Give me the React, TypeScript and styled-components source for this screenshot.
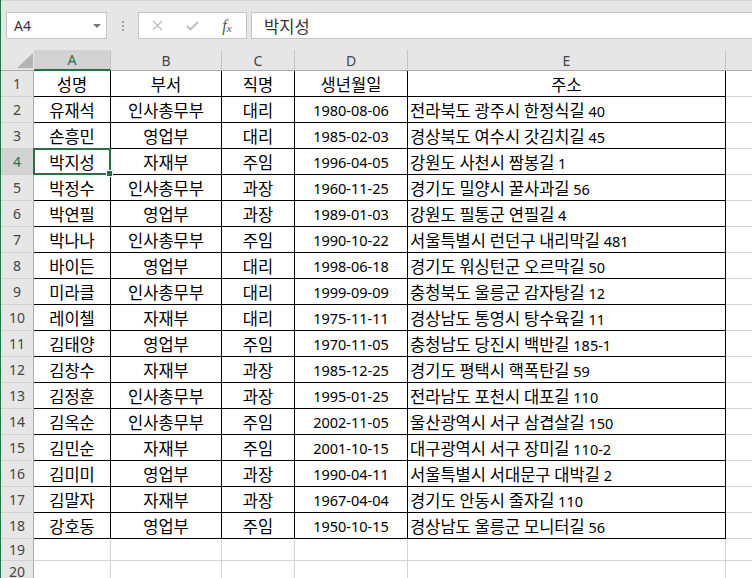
import React from 'react';
import styled, { createGlobalStyle, css } from 'styled-components';

const GlobalStyle = createGlobalStyle`
  html, body {
    margin: 0;
    padding: 0;
    background: #ffffff;
  }
  * {
    box-sizing: border-box;
  }
`;

const GREEN = '#217346';

const columns = ['A', 'B', 'C', 'D', 'E', 'F'];
const colWidths = [77, 111, 73, 113, 318, 200];

const rows: string[][] = [
  ['성명', '부서', '직명', '생년월일', '주소'],
  ['유재석', '인사총무부', '대리', '1980-08-06', '전라북도 광주시 한정식길 40'],
  ['손흥민', '영업부', '대리', '1985-02-03', '경상북도 여수시 갓김치길 45'],
  ['박지성', '자재부', '주임', '1996-04-05', '강원도 사천시 짬봉길 1'],
  ['박정수', '인사총무부', '과장', '1960-11-25', '경기도 밀양시 꿀사과길 56'],
  ['박연필', '영업부', '과장', '1989-01-03', '강원도 필통군 연필길 4'],
  ['박나나', '인사총무부', '주임', '1990-10-22', '서울특별시 런던구 내리막길 481'],
  ['바이든', '영업부', '대리', '1998-06-18', '경기도 워싱턴군 오르막길 50'],
  ['미라클', '인사총무부', '대리', '1999-09-09', '충청북도 울릉군 감자탕길 12'],
  ['레이첼', '자재부', '대리', '1975-11-11', '경상남도 통영시 탕수육길 11'],
  ['김태양', '영업부', '주임', '1970-11-05', '충청남도 당진시 백반길 185-1'],
  ['김창수', '자재부', '과장', '1985-12-25', '경기도 평택시 핵폭탄길 59'],
  ['김정훈', '인사총무부', '과장', '1995-01-25', '전라남도 포천시 대포길 110'],
  ['김옥순', '인사총무부', '주임', '2002-11-05', '울산광역시 서구 삼겹살길 150'],
  ['김민순', '자재부', '주임', '2001-10-15', '대구광역시 서구 장미길 110-2'],
  ['김미미', '영업부', '과장', '1990-04-11', '서울특별시 서대문구 대박길 2'],
  ['김말자', '자재부', '과장', '1967-04-04', '경기도 안동시 줄자길 110'],
  ['강호동', '영업부', '주임', '1950-10-15', '경상남도 울릉군 모니터길 56'],
];

const emptyRows = 2;

const Window = styled.div`
  width: 752px;
  height: 578px;
  overflow: hidden;
  border-left: 1px solid ${GREEN};
  background: #ffffff;
  font-family: "Noto Sans", "Noto Sans CJK KR", sans-serif;
`;

// Hangul runs are set a size up so they take the width Malgun Gothic gives them
const Hangul = styled.span`
  font-family: "Noto Sans CJK KR", sans-serif;
  font-size: 1.14em;
`;

const Text = styled.span`
  white-space: pre;
`;

const mixed = (s: string) => (
  <Text>
    {s.split(/([\uAC00-\uD7A3]+)/).map((part, i) =>
      i % 2 === 1 ? <Hangul key={i}>{part}</Hangul> : part
    )}
  </Text>
);

const FormulaBar = styled.div`
  display: flex;
  align-items: flex-start;
  height: 50px;
  padding-top: 11px;
  border-top: 1px solid #d4d4d4;
  background: #e6e6e6;
`;

const NameBox = styled.div`
  display: flex;
  align-items: center;
  justify-content: space-between;
  width: 101px;
  height: 27px;
  margin-left: 5px;
  padding: 0 5px 0 7px;
  background: #ffffff;
  border: 1px solid #c6c6c6;
  font-size: 14px;
  color: #333333;
`;

const DropArrow = styled.span`
  width: 0;
  height: 0;
  border-left: 4px solid transparent;
  border-right: 4px solid transparent;
  border-top: 4px solid #777777;
`;

const Grip = styled.div`
  display: flex;
  flex-direction: column;
  align-items: center;
  justify-content: center;
  gap: 2px;
  width: 31px;
  height: 27px;

  span {
    width: 2px;
    height: 2px;
    background: #a0a0a0;
  }
`;

const FxButtons = styled.div`
  display: flex;
  align-items: center;
  width: 109px;
  height: 27px;
  background: #ffffff;
  border: 1px solid #c6c6c6;
`;

const FxButton = styled.span<{ $width: number }>`
  display: flex;
  align-items: center;
  justify-content: center;
  width: ${p => p.$width}px;
  height: 100%;
`;

const FxLabel = styled.span`
  font-family: "Liberation Serif", serif;
  font-style: italic;
  font-size: 16px;
  color: #555555;

  sub {
    font-size: 11px;
    vertical-align: 0;
    position: relative;
    top: 1px;
  }
`;

const FormulaInput = styled.div`
  flex: 1;
  display: flex;
  align-items: center;
  height: 27px;
  margin-left: 4px;
  padding-left: 12px;
  background: #ffffff;
  border: 1px solid #c6c6c6;
  border-right: none;
  font-size: 14.5px;
  color: #333333;
`;

const Sheet = styled.div`
  display: grid;
  grid-template-columns: 33px ${colWidths.map(w => `${w}px`).join(' ')};
  grid-template-rows: 21px repeat(${rows.length}, 26px) repeat(${emptyRows}, 22px);
`;

const Corner = styled.div`
  display: flex;
  align-items: flex-end;
  justify-content: flex-end;
  padding: 0 1px 2px 0;
  background: #e6e6e6;
  border-bottom: 1px solid #ababab;
`;

const ColHeader = styled.div<{ $active?: boolean }>`
  display: flex;
  align-items: center;
  justify-content: center;
  font-size: 14px;
  color: #444444;
  background: #e6e6e6;
  border-right: 1px solid #c4c4c4;
  border-bottom: 1px solid #ababab;
  ${p => p.$active && css`
    background: #d2d2d2;
    color: ${GREEN};
    border-bottom: 2px solid ${GREEN};
  `}
`;

const RowHeader = styled.div<{ $active?: boolean }>`
  display: flex;
  align-items: center;
  justify-content: center;
  font-size: 14px;
  color: #444444;
  background: #e6e6e6;
  border-right: 1px solid #ababab;
  border-bottom: 1px solid #d0d0d0;
  ${p => p.$active && css`
    background: #d2d2d2;
    color: ${GREEN};
  `}
`;

const Cell = styled.div<{ $boxed?: boolean; $left?: boolean; $selected?: boolean }>`
  position: relative;
  display: flex;
  align-items: center;
  justify-content: ${p => (p.$left ? 'flex-start' : 'center')};
  padding-left: ${p => (p.$left ? '2px' : '0')};
  font-size: 14.5px;
  color: #000000;
  white-space: nowrap;
  border-right: 1px solid ${p => (p.$boxed ? '#000000' : '#d4d4d4')};
  border-bottom: 1px solid ${p => (p.$boxed ? '#000000' : '#d4d4d4')};
  ${p => p.$selected && css`
    z-index: 2;
  `}
`;

const Selection = styled.span`
  position: absolute;
  top: -1px;
  left: -1px;
  right: -1px;
  bottom: -1px;
  border: 2px solid ${GREEN};
  pointer-events: none;
`;

const FillHandle = styled.span`
  position: absolute;
  right: -4px;
  bottom: -4px;
  width: 7px;
  height: 7px;
  background: ${GREEN};
  border: 1px solid #ffffff;
`;

const selectedRow = 4;
const selectedCol = 0;

export default function App() {
  return (
    <>
      <GlobalStyle />
      <Window>
        <FormulaBar>
          <NameBox>
            A4
            <DropArrow />
          </NameBox>
          <Grip>
            <span />
            <span />
            <span />
          </Grip>
          <FxButtons>
            <FxButton $width={37}>
              <svg width="11" height="11" viewBox="0 0 11 11">
                <path d="M1 1 L10 10 M10 1 L1 10" stroke="#bdbdbd" strokeWidth="1.3" fill="none" />
              </svg>
            </FxButton>
            <FxButton $width={32}>
              <svg width="13" height="10" viewBox="0 0 13 10">
                <path d="M1 5 L4.5 8.5 L12 1" stroke="#bdbdbd" strokeWidth="1.8" fill="none" />
              </svg>
            </FxButton>
            <FxButton $width={38}>
              <FxLabel>
                f<sub>x</sub>
              </FxLabel>
            </FxButton>
          </FxButtons>
          <FormulaInput>{mixed('박지성')}</FormulaInput>
        </FormulaBar>

        <Sheet>
          <Corner>
            <svg width="16" height="15" viewBox="0 0 16 15">
              <polygon points="16,0 16,15 0,15" fill="#b4b4b4" />
            </svg>
          </Corner>
          {columns.map((c, i) => (
            <ColHeader key={c} $active={i === selectedCol}>
              {c}
            </ColHeader>
          ))}

          {rows.map((r, ri) => {
            const rowNum = ri + 1;
            return (
              <React.Fragment key={rowNum}>
                <RowHeader $active={rowNum === selectedRow}>{rowNum}</RowHeader>
                {r.map((v, ci) => {
                  const selected = rowNum === selectedRow && ci === selectedCol;
                  return (
                    <Cell key={ci} $boxed $left={ci === 4 && rowNum > 1} $selected={selected}>
                      {mixed(v)}
                      {selected && (
                        <Selection>
                          <FillHandle />
                        </Selection>
                      )}
                    </Cell>
                  );
                })}
                <Cell />
              </React.Fragment>
            );
          })}

          {Array.from({ length: emptyRows }, (_, i) => {
            const rowNum = rows.length + i + 1;
            return (
              <React.Fragment key={rowNum}>
                <RowHeader>{rowNum}</RowHeader>
                {columns.map(c => (
                  <Cell key={c} />
                ))}
              </React.Fragment>
            );
          })}
        </Sheet>
      </Window>
    </>
  );
}
